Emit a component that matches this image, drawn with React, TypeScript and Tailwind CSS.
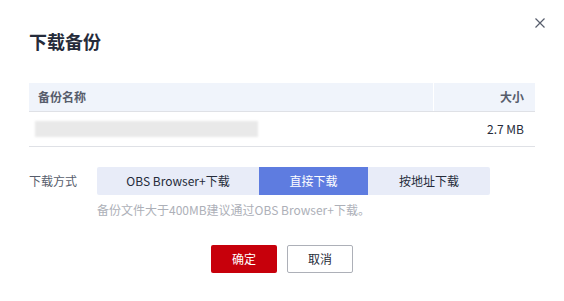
const font = { fontFamily: '"Noto Sans CJK SC", "Noto Sans", sans-serif' };

export default function App() {
  return (
    <div className="relative h-[301px] w-[564px] overflow-hidden bg-white text-[#252b3a]" style={font}>
      {/* close */}
      <button className="absolute left-[535px] top-[18px] h-[10px] w-[10px]">
        <svg viewBox="0 0 10 10" className="block h-[10px] w-[10px]" fill="none" stroke="#575d6c" strokeWidth="1.2">
          <path d="M0.5 0.5L9.5 9.5M9.5 0.5L0.5 9.5" />
        </svg>
      </button>

      <div className="px-[29px] pt-[28px]">
        <h2 className="text-[18px] font-bold leading-[26px] text-[#252b3a]">下载备份</h2>

        {/* table */}
        <div className="mt-[29px] w-[506px] text-[12px]">
          <div className="flex h-[29px] items-center border-b border-[#dfe1e6] bg-[#f0f4fb] font-bold text-[#575d6c]">
            <div className="flex h-full flex-1 items-center pl-[9px]">备份名称</div>
            <div className="h-full w-px bg-white" />
            <div className="flex h-full w-[101px] items-center justify-end pr-[11px]">大小</div>
          </div>
          <div className="flex h-[35px] items-center border-b border-[#dfe1e6]">
            <div className="flex-1 pl-[6px]">
              <div className="h-[16px] w-[223px] bg-[#e9e9e9] blur-[1px]" />
            </div>
            <div className="w-[101px] pr-[11px] text-right text-[#252b3a]">2.7 MB</div>
          </div>
        </div>

        {/* download method */}
        <div className="mt-[20px] flex text-[12px]">
          <div className="w-[68px] pt-[7px] leading-[14px] text-[#575d6c]">下载方式</div>
          <div>
            <div className="flex h-[28px] overflow-hidden rounded-[2px] text-[12px]">
              <button className="w-[162px] bg-[#e8ecf8] text-[#252b3a]">OBS Browser+下载</button>
              <button className="w-[109px] bg-[#5e7ce0] text-white">直接下载</button>
              <button className="w-[122px] bg-[#e8ecf8] text-[#252b3a]">按地址下载</button>
            </div>
            <p className="mt-[7px] leading-[16px] text-[#adb0b8]">备份文件大于400MB建议通过OBS Browser+下载。</p>
          </div>
        </div>

        {/* footer */}
        <div className="mt-[27px] flex justify-center gap-[10px] text-[12px]">
          <button className="h-[28px] w-[66px] rounded-[2px] bg-[#c7000b] text-white">确定</button>
          <button className="h-[28px] w-[66px] rounded-[2px] border border-[#adb0b8] bg-white text-[#252b3a]">取消</button>
        </div>
      </div>
    </div>
  );
}
